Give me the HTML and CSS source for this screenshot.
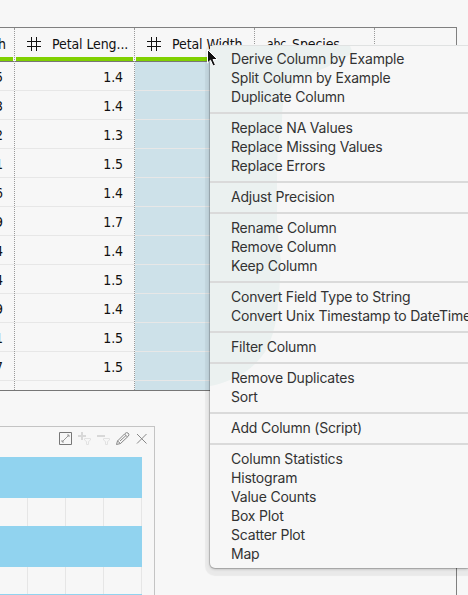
FILE: index.html
```html
<!DOCTYPE html>
<html lang="en">
<head>
<meta charset="utf-8">
<title>Column menu</title>
<link rel="stylesheet" href="styles.css">
</head>
<body>
<main class="workspace">
  <section class="table">
    <div class="col first">
      <div class="head"><span class="title">h</span></div>
      <div class="cell">5</div><div class="cell">3</div><div class="cell">2</div><div class="cell">1</div><div class="cell">6</div><div class="cell">9</div><div class="cell">4</div><div class="cell">4</div><div class="cell">9</div><div class="cell">1</div><div class="cell">7</div>
    </div>
    <div class="col">
      <div class="head"><svg class="hash" viewBox="0 0 14 14"><path d="M4.5 0v14M9.5 0v14M0 4.5h14M0 9.5h14"/></svg><span class="title">Petal Leng...</span></div>
      <div class="cell">1.4</div><div class="cell">1.4</div><div class="cell">1.3</div><div class="cell">1.5</div><div class="cell">1.4</div><div class="cell">1.7</div><div class="cell">1.4</div><div class="cell">1.5</div><div class="cell">1.4</div><div class="cell">1.5</div><div class="cell">1.5</div>
    </div>
    <div class="col selected">
      <div class="head"><svg class="hash" viewBox="0 0 14 14"><path d="M4.5 0v14M9.5 0v14M0 4.5h14M0 9.5h14"/></svg><span class="title">Petal Width</span></div>
      <div class="cell"></div><div class="cell"></div><div class="cell"></div><div class="cell"></div><div class="cell"></div><div class="cell"></div><div class="cell"></div><div class="cell"></div><div class="cell"></div><div class="cell"></div><div class="cell"></div>
    </div>
    <div class="col">
      <div class="head"><span class="abc">abc</span><span class="title">Species</span></div>
    </div>
  </section>
  <section class="panel">
    <div class="tools">
      <svg viewBox="0 0 14 14"><path d="M.5 .5h12v12H.5z" stroke="#777"/><path d="M3 10L10 3M8 3H10v2M3 8V10h2" stroke="#999"/></svg>
      <svg viewBox="0 0 14 14"><path d="M0 4h8M4 0v8" stroke="#d8d8d8" stroke-width="2"/><path d="M6.500 6.500h6V8L10.500 9.500V12.500h-2V9.500L6.500 8z" stroke="#e2e2e2"/></svg>
      <svg viewBox="0 0 14 14"><path d="M0 4h8" stroke="#d8d8d8" stroke-width="2"/><path d="M6.500 6.500h6V8L10.500 9.500V12.500h-2V9.500L6.500 8z" stroke="#e2e2e2"/></svg>
      <svg viewBox="0 0 14 14"><path d="M.500 12.500L1.500 9 9 1.500Q10.500 0 12 1T12.500 4L4.500 11.500zM8.500 2l3 3M1.500 9L4.500 11.500M4 9L10 3.500" stroke="#888"/></svg>
      <svg viewBox="0 0 14 14"><path d="M2 2l9.500 9.500M11.500 2L2 11.500" stroke="#888"/></svg>
    </div>
    <div class="chart"><div class="bar"></div><div class="bar"></div><div class="bar"></div></div>
  </section>
</main>
<nav class="menu">
  <svg class="tint" viewBox="0 0 180 345"><path d="M0 0H140L143 7Q120 22 88 32L76 48Q72 55 72 75Q67 95 67 130V180L71 215Q70 240 67 268Q64 290 55 306Q42 325 20 334Q8 339 0 340z"/></svg>
  <ul>
    <li>Derive Column by Example</li><li>Split Column by Example</li><li>Duplicate Column</li>
    <li class="sep"></li>
    <li>Replace NA Values</li><li>Replace Missing Values</li><li>Replace Errors</li>
    <li class="sep"></li>
    <li>Adjust Precision</li>
    <li class="sep"></li>
    <li>Rename Column</li><li>Remove Column</li><li>Keep Column</li>
    <li class="sep"></li>
    <li>Convert Field Type to String</li><li>Convert Unix Timestamp to DateTime</li>
    <li class="sep"></li>
    <li>Filter Column</li>
    <li class="sep"></li>
    <li>Remove Duplicates</li><li>Sort</li>
    <li class="sep"></li>
    <li>Add Column (Script)</li>
    <li class="sep"></li>
    <li>Column Statistics</li><li>Histogram</li><li>Value Counts</li><li>Box Plot</li><li>Scatter Plot</li><li>Map</li>
  </ul>
</nav>
<svg class="cursor" viewBox="0 0 12 18"><path d="M.5 .5V14L3.500 11.200 6 17 8.500 16 6 10.500H10.500z"/></svg>
</body>
</html>
```
FILE: styles.css
```css
* { box-sizing: border-box; }
body {
  margin: 0;
  width: 468px;
  height: 595px;
  overflow: hidden;
  position: relative;
  background: #f7f7f7;
  font-family: "DejaVu Sans Condensed", "DejaVu Sans", sans-serif;
  font-stretch: condensed;
  font-size: 14px;
  letter-spacing: -.1px;
  color: #111;
}
.workspace {
  width: 457px;
  height: 568px;
  margin-top: 27px;
  border-top: 1px solid #808080;
  border-right: 1px solid #808080;
}
.table {
  display: flex;
  height: 363px;
  border-bottom: 1px solid #777;
}
.col {
  flex: 0 0 120px;
  border-right: 1px dotted #999;
}
.first { flex-basis: 15px; display: flex; flex-direction: column; align-items: flex-end; overflow: hidden; }
.first .head, .first .cell { width: 120px; flex-shrink: 0; }
.head {
  height: 34px;
  display: flex;
  align-items: center;
  padding: 0 0 2px 12px;
  border-bottom: 1px solid #777;
  background: linear-gradient(#80d000, #80d000) 1px 29px / calc(100% - 2px) 4px no-repeat;
}
.first .head { justify-content: flex-end; padding-right: 8px; }
.hash { width: 14px; height: 14px; margin: 1px 11px 0 0; fill: none; stroke: #111; }
.abc { width: 25px; font-size: 12px; }
.title { white-space: nowrap; }
.cell {
  height: 29px;
  padding-right: 11px;
  border-bottom: 1px solid #e7e7e7;
  line-height: 31px;
  text-align: right;
}
.selected { background: linear-gradient(#cde1e9, #cde1e9) 0 34px no-repeat; }
.panel {
  width: 155px;
  height: 180px;
  margin-top: 35px;
  border: solid #c4c4c4;
  border-width: 1px 1px 0 0;
}
.tools { display: flex; gap: 5px; padding: 5px 6px 0 59px; height: 30px; }
.tools svg { width: 14px; height: 14px; fill: none; flex: none; }
.chart {
  width: 142px;
  height: 138px;
  display: flex;
  flex-direction: column;
  gap: 28px;
  overflow: hidden;
  background: repeating-linear-gradient(to right, #e6e6e6 0 1px, transparent 1px 38px) 27px 0 no-repeat;
}
.bar { flex: 0 0 41px; background: #91d3ef; }
.bar:last-child { margin-top: -1px; }
.menu {
  position: absolute;
  left: 210px;
  top: 45px;
  width: 258px;
  height: 523px;
  padding-top: 4px;
  background: #f7f7f7;
  border-top: 1px solid #e0e2e2;
  border-radius: 5px 0 0 5px;
  box-shadow: 0 0 0 1px rgba(0,0,0,.14), 0 1px 3px rgba(0,0,0,.25), 0 3px 1px 5px rgba(0,0,0,.055);
  clip-path: inset(0 0 -20px -20px);
}
.menu ul { position: relative; list-style: none; margin: 0; padding: 0; overflow: hidden; }
.menu li {
  height: 19px;
  line-height: 17px;
  padding-left: 21px;
  font-family: Inter, sans-serif;
  font-size: 14px;
  letter-spacing: -.2px;
  color: #333;
  white-space: nowrap;
}
.menu .sep { height: 12px; padding: 0; background: linear-gradient(#dadada, #dadada) 0 5px / 100% 2px no-repeat; }
.tint { position: absolute; left: 0; top: 0; width: 180px; height: 345px; fill: #ebf1f0; }
.cursor { position: absolute; left: 207px; top: 49px; width: 12px; height: 18px; fill: #111; stroke: #fff; }
```
